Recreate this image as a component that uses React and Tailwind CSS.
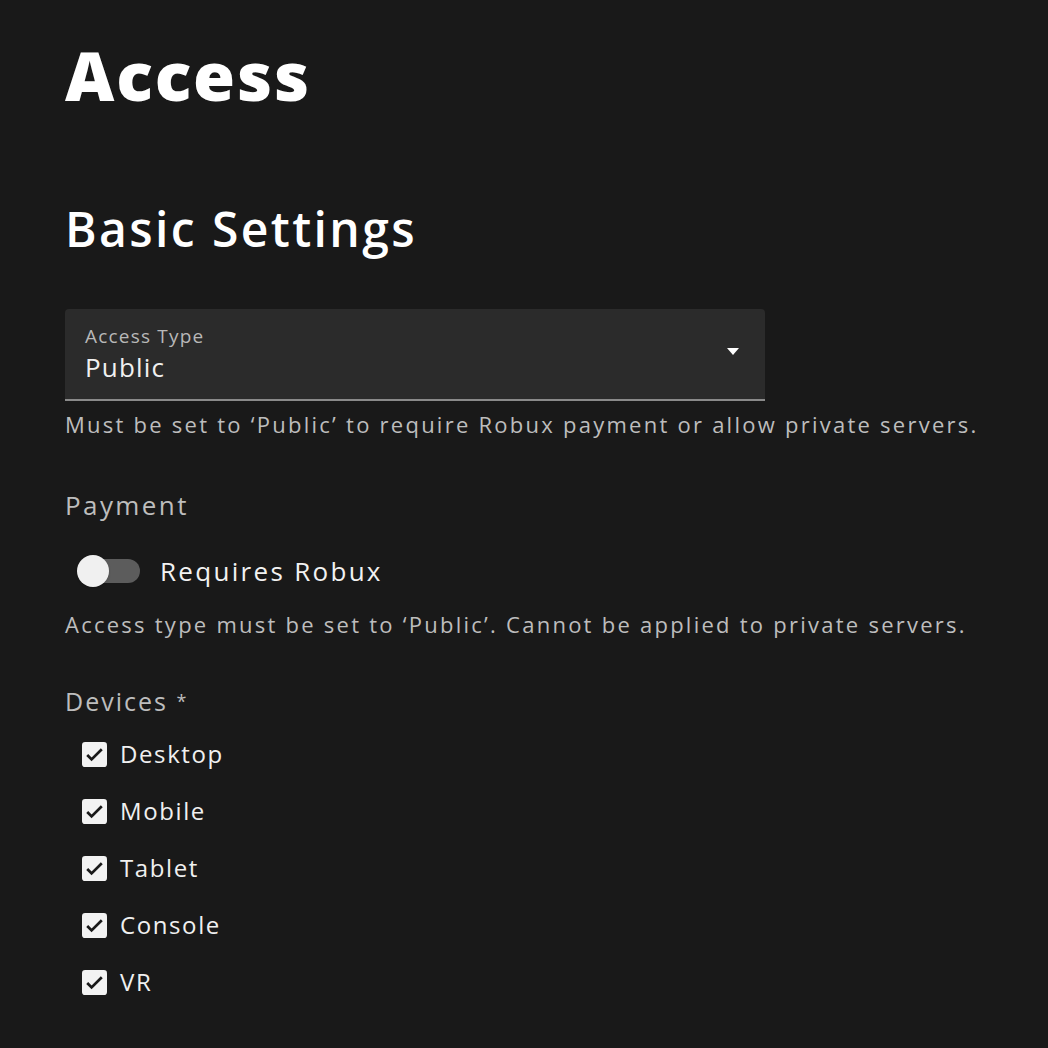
const devices = ["Desktop", "Mobile", "Tablet", "Console", "VR"];

const CheckIcon = () => (
  <svg viewBox="0 0 24 24" className="w-[25px] h-[25px]">
    <rect x="0" y="0" width="24" height="24" rx="3" fill="#f2f2f2" />
    <path d="M5 12.5l4.2 4.2L19 7" fill="none" stroke="#191919" strokeWidth="2.6" />
  </svg>
);

export default function App() {
  return (
    <div
      className="min-h-screen w-full bg-[#191919] text-white pl-[65px] pt-[35px]"
      style={{ fontFamily: '"Open Sans", "Lato", sans-serif' }}
    >
      <h1 className="text-[68px] font-extrabold leading-[80px] tracking-[1.8px]">Access</h1>

      <h2 className="mt-[84px] text-[48px] font-semibold leading-[60px] tracking-[2.4px]">Basic Settings</h2>

      {/* select */}
      <div className="mt-[50px] w-[700px] h-[92px] bg-[#2b2b2b] rounded-t-[4px] border-b-2 border-[#8a8a8a] flex items-center justify-between pl-[20px] pr-[26px]">
        <div className="flex flex-col">
          <span className="text-[19px] leading-[26px] text-[#b8b8b8] tracking-[1.2px]">Access Type</span>
          <span className="text-[26px] leading-[36px] text-[#f0f0f0] tracking-[1.2px]">Public</span>
        </div>
        <svg viewBox="0 0 12 8" className="w-[12px] h-[8px] mb-[4px]">
          <path d="M0 0h12L6 7z" fill="#fff" />
        </svg>
      </div>
      <p className="mt-[8px] text-[22px] leading-[30px] text-[#bdbdbd] tracking-[2.25px]">
        Must be set to ‘Public’ to require Robux payment or allow private servers.
      </p>

      <p className="mt-[49px] text-[26px] leading-[34px] text-[#bdbdbd] tracking-[2.4px]">Payment</p>

      <div className="mt-[32px] flex items-center">
        <div className="relative w-[76px] h-[32px] flex items-center">
          <div className="ml-[14px] w-[61px] h-[24px] rounded-full bg-[#5c5c5c]" />
          <div className="absolute left-[12px] top-0 w-[32px] h-[32px] rounded-full bg-[#f0f0f0] shadow" />
        </div>
        <span className="ml-[19px] text-[26px] leading-[34px] text-[#f2f2f2] tracking-[2.3px]">Requires Robux</span>
      </div>

      <p className="mt-[21px] text-[22px] leading-[30px] text-[#bdbdbd] tracking-[2.25px]">
        Access type must be set to ‘Public’. Cannot be applied to private servers.
      </p>

      <p className="mt-[45px] text-[25px] leading-[34px] text-[#bdbdbd] tracking-[2px]">
        Devices <span className="text-[18px] align-top">*</span>
      </p>

      <div className="mt-[19px] flex flex-col gap-[23px] pl-[17px]">
        {devices.map((d) => (
          <label key={d} className="flex items-center h-[34px] gap-[13px]">
            <CheckIcon />
            <span className="text-[24px] leading-[34px] text-[#f0f0f0] tracking-[1.6px]">{d}</span>
          </label>
        ))}
      </div>
    </div>
  );
}
